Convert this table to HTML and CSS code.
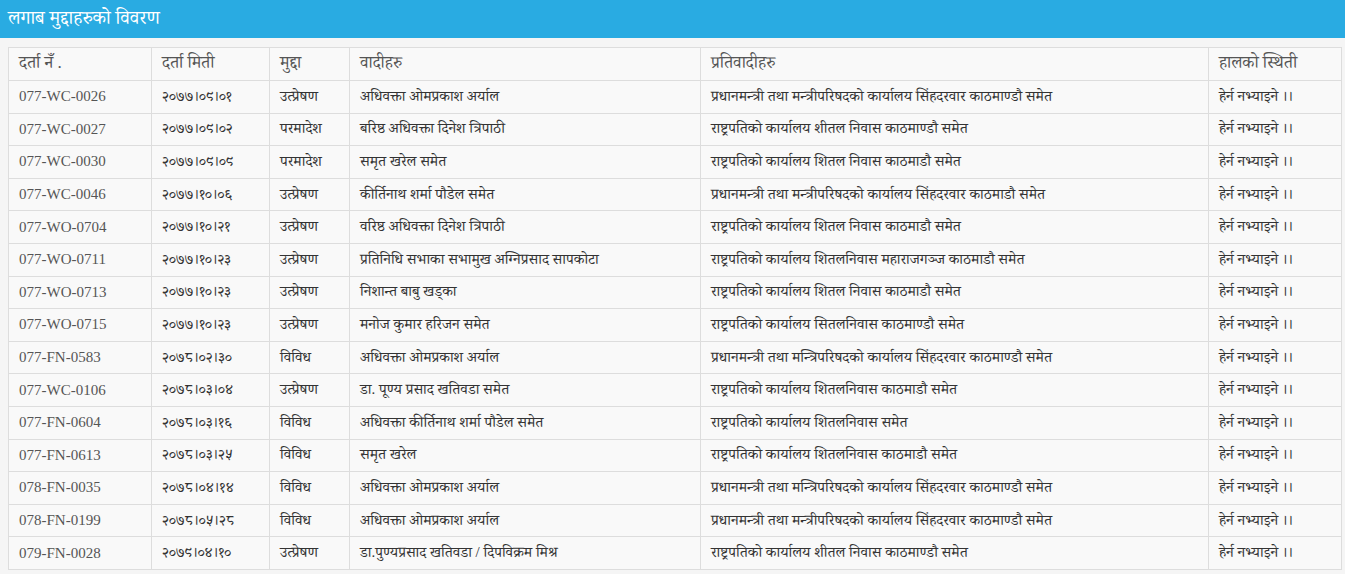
FILE: index.html
```html
<!DOCTYPE html>
<html lang="ne">
<head>
<meta charset="utf-8">
<title>लगाब मुद्दाहरुको विवरण</title>
<link rel="stylesheet" href="styles.css">
</head>
<body>
<div class="titlebar">लगाब मुद्दाहरुको विवरण</div>
<div class="wrap">
<table class="cases">
<colgroup>
<col class="c1"><col class="c2"><col class="c3"><col class="c4"><col class="c5"><col class="c6">
</colgroup>
<thead>
<tr><th>दर्ता नँ .</th><th>दर्ता मिती</th><th>मुद्दा</th><th>वादीहरु</th><th>प्रतिवादीहरु</th><th>हालको स्थिती</th></tr>
</thead>
<tbody>
<tr><td class="id">077-WC-0026</td><td>२०७७।०९।०१</td><td>उत्प्रेषण</td><td>अधिवक्ता ओमप्रकाश अर्याल</td><td>प्रधानमन्त्री तथा मन्त्रीपरिषदको कार्यालय सिंहदरवार काठमाण्डौ समेत</td><td>हेर्न नभ्याइने ।।</td></tr>
<tr><td class="id">077-WC-0027</td><td>२०७७।०९।०२</td><td>परमादेश</td><td>बरिष्ठ अधिवक्ता दिनेश त्रिपाठी</td><td>राष्ट्रपतिको कार्यालय शीतल निवास काठमाण्डौ समेत</td><td>हेर्न नभ्याइने ।।</td></tr>
<tr><td class="id">077-WC-0030</td><td>२०७७।०९।०९</td><td>परमादेश</td><td>समृत खरेल समेत</td><td>राष्ट्रपतिको कार्यालय शितल निवास काठमाडौ समेत</td><td>हेर्न नभ्याइने ।।</td></tr>
<tr><td class="id">077-WC-0046</td><td>२०७७।१०।०६</td><td>उत्प्रेषण</td><td>कीर्तिनाथ शर्मा पौडेल समेत</td><td>प्रधानमन्त्री तथा मन्त्रीपरिषदको कार्यालय सिंहदरवार काठमाडौ समेत</td><td>हेर्न नभ्याइने ।।</td></tr>
<tr><td class="id">077-WO-0704</td><td>२०७७।१०।२१</td><td>उत्प्रेषण</td><td>वरिष्ठ अधिवक्ता दिनेश त्रिपाठी</td><td>राष्ट्रपतिको कार्यालय शितल निवास काठमाडौ समेत</td><td>हेर्न नभ्याइने ।।</td></tr>
<tr><td class="id">077-WO-0711</td><td>२०७७।१०।२३</td><td>उत्प्रेषण</td><td>प्रतिनिधि सभाका सभामुख अग्निप्रसाद सापकोटा</td><td>राष्ट्रपतिको कार्यालय शितलनिवास महाराजगञ्ज काठमाडौ समेत</td><td>हेर्न नभ्याइने ।।</td></tr>
<tr><td class="id">077-WO-0713</td><td>२०७७।१०।२३</td><td>उत्प्रेषण</td><td>निशान्त बाबु खड्का</td><td>राष्ट्रपतिको कार्यालय शितल निवास काठमाडौ समेत</td><td>हेर्न नभ्याइने ।।</td></tr>
<tr><td class="id">077-WO-0715</td><td>२०७७।१०।२३</td><td>उत्प्रेषण</td><td>मनोज कुमार हरिजन समेत</td><td>राष्ट्रपतिको कार्यालय सितलनिवास काठमाण्डौ समेत</td><td>हेर्न नभ्याइने ।।</td></tr>
<tr><td class="id">077-FN-0583</td><td>२०७८।०२।३०</td><td>विविध</td><td>अधिवक्ता ओमप्रकाश अर्याल</td><td>प्रधानमन्त्री तथा मन्त्रिपरिषदको कार्यालय सिंहदरवार काठमाण्डौ समेत</td><td>हेर्न नभ्याइने ।।</td></tr>
<tr><td class="id">077-WC-0106</td><td>२०७८।०३।०४</td><td>उत्प्रेषण</td><td>डा. पूण्य प्रसाद खतिवडा समेत</td><td>राष्ट्रपतिको कार्यालय शितलनिवास काठमाडौ समेत</td><td>हेर्न नभ्याइने ।।</td></tr>
<tr><td class="id">077-FN-0604</td><td>२०७८।०३।१६</td><td>विविध</td><td>अधिवक्ता कीर्तिनाथ शर्मा पौडेल समेत</td><td>राष्ट्रपतिको कार्यालय शितलनिवास समेत</td><td>हेर्न नभ्याइने ।।</td></tr>
<tr><td class="id">077-FN-0613</td><td>२०७८।०३।२५</td><td>विविध</td><td>समृत खरेल</td><td>राष्ट्रपतिको कार्यालय शितलनिवास काठमाडौ समेत</td><td>हेर्न नभ्याइने ।।</td></tr>
<tr><td class="id">078-FN-0035</td><td>२०७८।०४।१४</td><td>विविध</td><td>अधिवक्ता ओमप्रकाश अर्याल</td><td>प्रधानमन्त्री तथा मन्त्रिपरिषदको कार्यालय सिंहदरवार काठमाण्डौ समेत</td><td>हेर्न नभ्याइने ।।</td></tr>
<tr><td class="id">078-FN-0199</td><td>२०७८।०५।२८</td><td>विविध</td><td>अधिवक्ता ओमप्रकाश अर्याल</td><td>प्रधानमन्त्री तथा मन्त्रीपरिषदको कार्यालय सिंहदरवार काठमाण्डौ समेत</td><td>हेर्न नभ्याइने ।।</td></tr>
<tr><td class="id">079-FN-0028</td><td>२०७९।०४।१०</td><td>उत्प्रेषण</td><td>डा.पुण्यप्रसाद खतिवडा / दिपविक्रम मिश्र</td><td>राष्ट्रपतिको कार्यालय शीतल निवास काठमाण्डौ समेत</td><td>हेर्न नभ्याइने ।।</td></tr>
</tbody>
</table>
</div>
</body>
</html>
```

FILE: styles.css
```css
html, body {
  margin: 0;
  padding: 0;
}
body {
  background: #f5f5f5;
  font-family: "Liberation Serif", "Noto Serif Devanagari", "Noto Sans Devanagari", serif;
  color: #333;
}
.titlebar {
  background: #29abe2;
  color: #fff;
  height: 38px;
  line-height: 36px;
  padding-left: 8px;
  font-size: 19px;
}
.wrap {
  padding: 9px 5px 0 8px;
}
.cases {
  width: 100%;
  border-collapse: collapse;
  table-layout: fixed;
  background: #f9f9f9;
  font-size: 15px;
}
.c1 { width: 143px; }
.c2 { width: 118px; }
.c3 { width: 80px; }
.c4 { width: 351px; }
.c5 { width: 508px; }
.c6 { width: 133px; }
.cases th, .cases td {
  border: 1px solid #ddd;
  text-align: left;
  padding: 3px 0 0 10px;
  white-space: nowrap;
  overflow: hidden;
  box-sizing: border-box;
}
.cases th {
  height: 33px;
  font-weight: normal;
  font-size: 17px;
  color: #555;
}
.cases td {
  height: 32.6px;
}
.cases td.id {
  color: #555;
  padding-top: 0;
}
```
